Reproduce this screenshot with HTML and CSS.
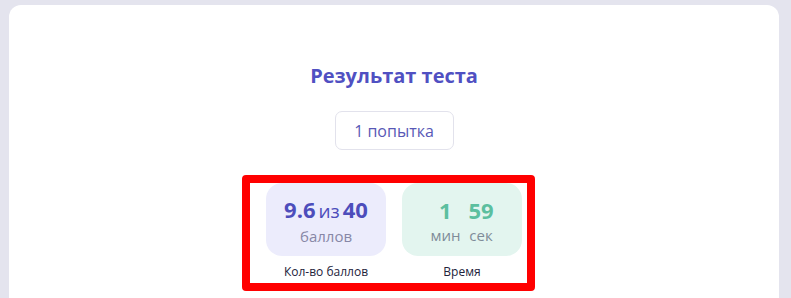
FILE: index.html
```html
<!DOCTYPE html>
<html lang="ru">
<head>
<meta charset="utf-8">
<title>Результат теста</title>
<link rel="stylesheet" href="styles.css">
</head>
<body>
<div class="card">
  <h1 class="title">Результат теста</h1>
  <div class="attempt">1 попытка</div>
  <div class="stats">
    <div class="stat">
      <div class="tile tile-score">
        <div class="value"><b>9.6</b><span class="of">из</span><b>40</b></div>
        <div class="unit">баллов</div>
      </div>
      <div class="label">Кол-во баллов</div>
    </div>
    <div class="stat">
      <div class="tile tile-time">
        <div class="time">
          <div class="part"><b>1</b><span class="unit">мин</span></div>
          <div class="part"><b>59</b><span class="unit">сек</span></div>
        </div>
      </div>
      <div class="label">Время</div>
    </div>
    <div class="highlight"></div>
  </div>
</div>
</body>
</html>
```

FILE: styles.css
```css
* { box-sizing: border-box; }
html, body { margin: 0; padding: 0; }
body {
  background: #e4e4ee;
  font-family: "Open Sans", "Noto Sans", sans-serif;
  height: 298px;
  overflow: hidden;
}
.card {
  margin: 5px 12px 0 9px;
  background: #ffffff;
  border-radius: 12px 12px 0 0;
  height: 293px;
  padding-top: 57px;
  display: flex;
  flex-direction: column;
  align-items: center;
}
.title {
  margin: 0;
  font-size: 20px;
  line-height: 28px;
  font-weight: 700;
  color: #5050c2;
}
.attempt {
  margin-top: 21px;
  width: 119px;
  height: 39px;
  border: 1px solid #e2e2ec;
  border-radius: 7px;
  display: flex;
  align-items: center;
  justify-content: center;
  font-size: 16px;
  color: #5858b6;
}
.stats {
  position: relative;
  margin-top: 33px;
  display: flex;
  gap: 16px;
}
.stat {
  display: flex;
  flex-direction: column;
  align-items: center;
}
.tile {
  width: 120px;
  height: 73px;
  border-radius: 16px;
  display: flex;
  flex-direction: column;
  align-items: center;
  justify-content: center;
}
.tile-score { background: #ececfc; }
.tile-time { background: #e3f5ef; }
.value {
  display: flex;
  align-items: baseline;
  gap: 3px;
  color: #4d4dbb;
  line-height: 30px;
}
.value b { font-size: 22px; font-weight: 700; }
.value .of { font-size: 19px; }
.unit {
  font-size: 15px;
  line-height: 20px;
  color: #8787a6;
}
.time {
  display: flex;
  gap: 8px;
}
.part {
  display: flex;
  flex-direction: column;
  align-items: center;
}
.part b {
  font-size: 22px;
  line-height: 30px;
  font-weight: 700;
  color: #5cbf9f;
}
.tile-time .unit { color: #7f8c99; }
.label {
  margin-top: 8px;
  font-size: 12px;
  line-height: 16px;
  color: #22223a;
}
.highlight {
  position: absolute;
  left: -24px;
  right: -13px;
  top: -8px;
  bottom: -11px;
  border: 8px solid #ff0000;
  border-radius: 4px;
  pointer-events: none;
}
```
